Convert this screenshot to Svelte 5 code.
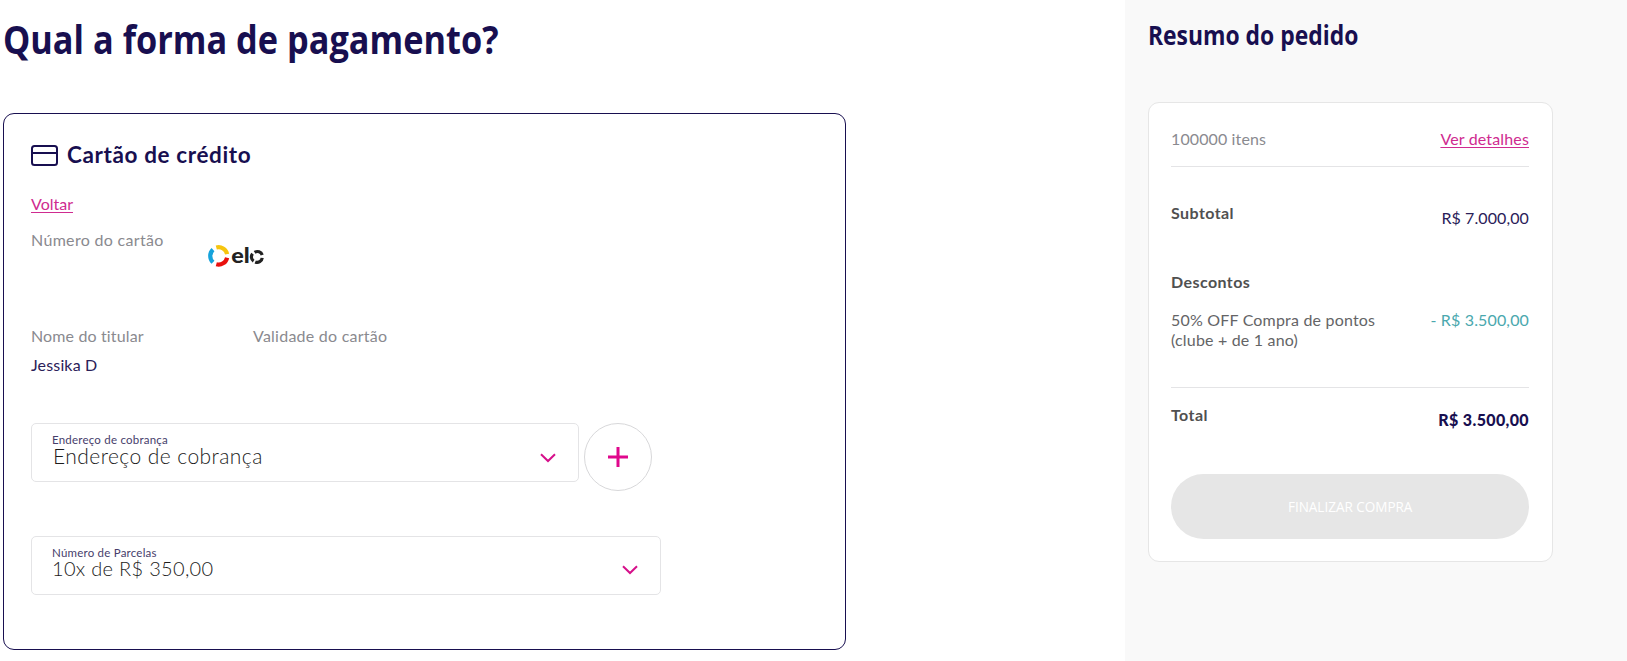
<script lang="ts">
  let holder = 'Jessika D';
  let address = 'Endereço de cobrança';
  let installments = '10x de R$ 350,00';
  let canFinish = false;

  const summary = {
    items: '100000 itens',
    subtotal: 'R$ 7.000,00',
    discounts: [{ lines: ['50% OFF Compra de pontos', '(clube + de 1 ano)'], value: '- R$ 3.500,00' }],
    total: 'R$ 3.500,00'
  };
</script>

<div class="checkout">
  <main class="payment">
    <h1>Qual a forma de pagamento?</h1>

    <section class="card">
      <header class="card-header">
        <svg class="card-icon" width="27" height="21" viewBox="0 0 27 21" fill="none" stroke="currentColor" stroke-width="2">
          <rect x="1" y="1" width="25" height="19" rx="2.5" />
          <path d="M1 8H26" />
        </svg>
        <h2>Cartão de crédito</h2>
      </header>

      <a class="link back" href="#voltar">Voltar</a>

      <div class="number-row">
        <span class="label number">Número do cartão</span>
        <!-- bandeira elo -->
        <svg class="elo" width="60" height="34" viewBox="0 -6 60 34" fill="none" role="img" aria-label="elo">
          <g stroke-width="4.2">
            <path stroke="#f6c50e" d="M8.3 2.5A8.7 8.7 0 0 1 19.1 9.1" />
            <path stroke="#e9100e" d="M19.1 12.7A8.7 8.7 0 0 1 8.3 19.3" />
            <path stroke="#15a3dc" d="M5 17.3A8.7 8.7 0 0 1 5 4.6" />
          </g>
          <text x="23.3" y="17.6" textLength="18.5" lengthAdjust="spacingAndGlyphs">el</text>
          <path stroke="#222" stroke-width="3.2" d="M45.6 16.1A5 5 0 0 1 44.6 8.7M46.6 7.4A5 5 0 0 1 54.2 10M54.2 12.9A5 5 0 0 1 47.2 17" />
        </svg>
      </div>

      <div class="info-row">
        <div class="info holder">
          <span class="label">Nome do titular</span>
          <span class="value">{holder}</span>
        </div>
        <div class="info expiry">
          <span class="label">Validade do cartão</span>
        </div>
      </div>

      <div class="address-row">
        <button class="select address">
          <span class="select-text">
            <small>Endereço de cobrança</small>
            <span class="selected">{address}</span>
          </span>
          <svg class="chevron" width="16" height="10" viewBox="0 0 16 10"><path d="M1 1.2L8 8L15 1.2" /></svg>
        </button>
        <button class="add" aria-label="Adicionar endereço">
          <svg width="20" height="20" viewBox="0 0 20 20"><path d="M10 0V20M0 10H20" /></svg>
        </button>
      </div>

      <button class="select installments">
        <span class="select-text">
          <small>Número de Parcelas</small>
          <span class="selected">{installments}</span>
        </span>
        <svg class="chevron" width="16" height="10" viewBox="0 0 16 10"><path d="M1 1.2L8 8L15 1.2" /></svg>
      </button>
    </section>
  </main>

  <aside class="summary">
    <h3>Resumo do pedido</h3>

    <div class="box">
      <div class="line items">
        <span class="label">{summary.items}</span>
        <a class="link" href="#detalhes">Ver detalhes</a>
      </div>

      <div class="line subtotal">
        <strong>Subtotal</strong>
        <span class="price">{summary.subtotal}</span>
      </div>

      <strong class="discounts-title">Descontos</strong>
      {#each summary.discounts as discount}
        <div class="line discount">
          <span class="discount-name">
            {#each discount.lines as text}
              <span>{text}</span>
            {/each}
          </span>
          <span class="price off">{discount.value}</span>
        </div>
      {/each}

      <div class="line total">
        <strong>Total</strong>
        <span class="price final">{summary.total}</span>
      </div>

      <button class="finish" disabled={!canFinish}><span>FINALIZAR COMPRA</span></button>
    </div>
  </aside>
</div>

<style>
  :global(body) {
    margin: 0;
    background: #fff;
    overflow: hidden;
  }

  .checkout {
    display: flex;
    height: 661px;
    font-family: Lato, sans-serif;
    font-size: 16px;
    line-height: 20px;
    letter-spacing: 0.15px;
    color: #2a2058;
  }

  h1,
  h2,
  h3 {
    margin: 0;
  }

  /* narrow headings */
  h1,
  h3 {
    width: fit-content;
    font-family: "Open Sans", sans-serif;
    font-weight: 700;
    letter-spacing: 0;
    color: #180f50;
    transform: scaleX(0.88);
    transform-origin: left center;
  }

  button {
    font: inherit;
    letter-spacing: inherit;
    color: inherit;
    background: #fff;
    text-align: left;
    box-sizing: border-box;
  }

  .payment {
    flex: 0 0 1122px;
    padding: 12px 0 0 3px;
  }

  h1 {
    font-size: 39px;
    line-height: 54px;
  }

  .card {
    box-sizing: border-box;
    width: 843px;
    height: 537px;
    margin-top: 47px;
    padding: 26px 27px 0;
    border: 1px solid #180f50;
    border-radius: 11px;
  }

  .card-header {
    display: flex;
    align-items: center;
    gap: 9px;
    color: #180f50;
  }

  .card-icon {
    margin-top: 1px;
  }

  h2 {
    font-size: 22.5px;
    font-weight: 700;
    line-height: 30px;
    letter-spacing: 0.62px;
  }

  .label {
    color: #8a8a8f;
    letter-spacing: 0.2px;
  }

  .link {
    color: #cf2b90;
    text-decoration: underline;
    text-underline-offset: 2px;
    text-decoration-thickness: 1px;
  }

  .back {
    display: block;
    width: fit-content;
    margin-top: 24px;
    letter-spacing: 0;
  }

  .number-row {
    display: flex;
    height: 96px;
    margin-top: 16px;
  }

  .number {
    width: 177px;
    letter-spacing: 0.32px;
  }

  .elo {
    margin-top: 9px;
  }

  .elo text {
    font-family: Lato, sans-serif;
    font-size: 20px;
    font-weight: 900;
    letter-spacing: 0;
    fill: #222;
  }

  .info-row {
    display: flex;
  }

  .info {
    display: flex;
    flex-direction: column;
    gap: 9px;
  }

  .holder {
    width: 222px;
  }

  .holder .label {
    letter-spacing: 0.14px;
  }

  .expiry .label {
    letter-spacing: 0.24px;
  }

  .address-row {
    display: flex;
    align-items: flex-start;
    gap: 5px;
    margin-top: 48px;
  }

  .select {
    display: flex;
    justify-content: space-between;
    align-items: flex-start;
    height: 59px;
    padding: 9px 22px 0 20px;
    border: 1px solid #e4e4e6;
    border-radius: 5px;
  }

  .address {
    width: 548px;
  }

  .installments {
    width: 630px;
    margin-top: 45px;
  }

  .select-text {
    display: flex;
    flex-direction: column;
  }

  .select small {
    font-size: 11.5px;
    line-height: 14px;
    letter-spacing: 0.22px;
    color: #463d6b;
  }

  .selected {
    margin-top: -1px;
    padding-left: 1px;
    font-size: 21px;
    font-weight: 300;
    line-height: 20px;
    letter-spacing: 0.44px;
    color: #1c1c1c;
  }

  .installments .selected {
    margin-top: -2px;
    padding-left: 0;
    font-size: 20px;
    letter-spacing: 0.31px;
  }

  .chevron {
    margin-top: 20px;
  }

  .installments .chevron {
    margin-top: 19px;
  }

  .chevron path,
  .add path {
    fill: none;
    stroke: #d6108a;
    stroke-width: 2;
  }

  .add {
    display: flex;
    align-items: center;
    justify-content: center;
    width: 68px;
    height: 68px;
    padding: 0;
    border: 1px solid #d8d8da;
    border-radius: 50%;
  }

  .add path {
    stroke: #e0078c;
    stroke-width: 3;
  }

  .summary {
    flex: 1;
    padding: 17px 0 0 23px;
    background: #f9f9f9;
  }

  h3 {
    font-size: 26px;
    line-height: 36px;
  }

  .box {
    box-sizing: border-box;
    width: 405px;
    height: 460px;
    margin-top: 49px;
    padding: 26px 23px 0 22px;
    border: 1px solid #e6e6e6;
    border-radius: 11px;
    background: #fff;
  }

  .line {
    display: flex;
    justify-content: space-between;
  }

  .items {
    padding-bottom: 17px;
    border-bottom: 1px solid #e4e4e6;
  }

  .items .label {
    letter-spacing: 0.12px;
  }

  .subtotal {
    margin-top: 36px;
  }

  strong {
    color: #505050;
    letter-spacing: 0.42px;
  }

  .price {
    margin-top: 5px;
    letter-spacing: 0.1px;
  }

  .discounts-title {
    display: block;
    margin-top: 44px;
  }

  .discount {
    margin-top: 18px;
    padding-bottom: 37px;
    border-bottom: 1px solid #e4e4e6;
  }

  .discount-name {
    display: flex;
    flex-direction: column;
    color: #646466;
    letter-spacing: 0.19px;
  }

  .price.off {
    margin-top: 0;
    color: #4aa8ae;
    letter-spacing: 0.15px;
  }

  .total {
    margin-top: 17px;
  }

  .price.final {
    font-weight: 900;
    letter-spacing: 0.36px;
    color: #180f50;
  }

  .finish {
    display: block;
    width: 100%;
    height: 65px;
    margin-top: 44px;
    padding-bottom: 3px;
    border: 0;
    border-radius: 33px;
    background: #e6e6e6;
    color: #fff;
    font-family: "Open Sans", sans-serif;
    font-size: 15px;
    letter-spacing: 0;
    text-align: center;
  }

  .finish span {
    display: inline-block;
    transform: scaleX(0.9);
  }
</style>
